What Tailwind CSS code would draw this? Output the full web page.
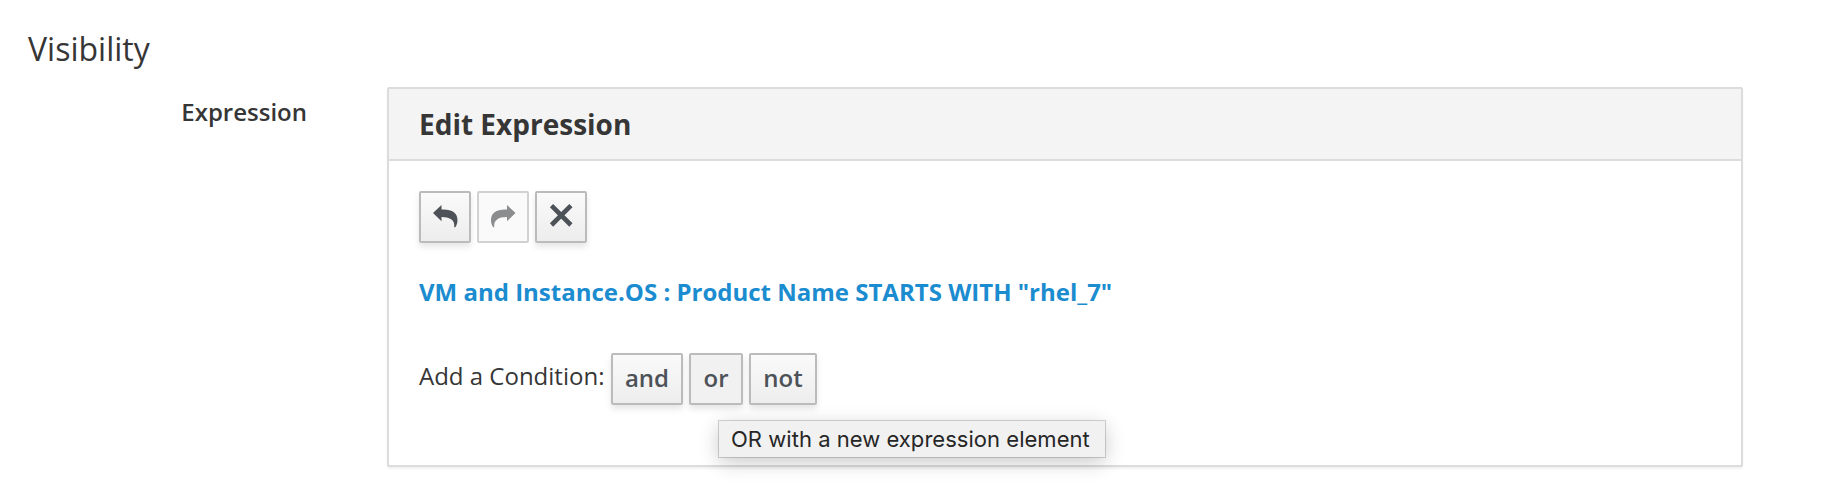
<!DOCTYPE html>
<html lang="en">
<head>
<meta charset="utf-8">
<title>Visibility</title>
<script src="https://cdn.jsdelivr.net/npm/@tailwindcss/browser@4"></script>
</head>
<body class="h-[482px] overflow-hidden bg-white font-['Open_Sans',sans-serif] text-2xl text-[#363636]">
<h3 class="h-[87px] pt-[29px] pl-7 text-[32px] leading-10">Visibility</h3>
<div class="flex">
  <label class="w-[387px] shrink-0 pt-[5px] pr-20 text-right leading-10 font-semibold">Expression</label>
  <section class="relative h-[380px] w-[1356px] rounded-[2px] border-2 border-[#dcdcdc] bg-white shadow-[0_2px_2px_rgba(0,0,0,0.05)]">
    <h3 class="h-[72px] border-b-2 border-[#dcdcdc] bg-[#f4f4f4] pl-[30px] text-[28px] leading-[70px] font-bold">Edit Expression</h3>
    <div class="px-[30px] pt-[30px]">
      <div class="flex gap-1.5">
        <button class="flex size-[52px] items-center justify-center rounded-[2px] border-2 border-[#bbb] bg-linear-to-b from-[#fafafa] to-[#ededed] shadow-[0_4px_6px_rgba(3,3,3,0.1)]" title="Undo">
          <svg class="size-12" viewBox="0 0 48 48" fill="#4d5258"><path d="M12 20 20.500 12v4.500C31 16 36.500 20 36.500 27c0 3-.8 5.500-2.200 7.200h-1.100c.8-6-2.700-10.200-12.700-10.200v4.200z"/></svg>
        </button>
        <button class="flex size-[52px] items-center justify-center rounded-[2px] border-2 border-[#d1d1d1] bg-[#fafafa]" title="Redo" disabled>
          <svg class="size-12" viewBox="0 0 48 48" fill="#8b8d8f"><path d="M36.500 20 28 12v4.500C17.500 16 12 20 12 27c0 3 .8 5.500 2.200 7.200h1.100c-.8-6 2.700-10.200 12.700-10.200v4.200z"/></svg>
        </button>
        <button class="flex size-[52px] items-center justify-center rounded-[2px] border-2 border-[#bbb] bg-linear-to-b from-[#fafafa] to-[#ededed] shadow-[0_4px_6px_rgba(3,3,3,0.1)]" title="Remove">
          <svg class="size-12" viewBox="0 0 48 48"><path d="M14.500 12.600 33.900 32M33.900 12.600 14.500 32" stroke="#4d5258" stroke-width="4.600" fill="none"/></svg>
        </button>
      </div>
      <p class="mt-[29px] leading-10 font-bold text-[#1a8ccf]">VM and Instance.OS : Product Name STARTS WITH "rhel_7"</p>
      <div class="mt-[41px] flex">
        <span class="w-48 pt-[3px] leading-10 whitespace-nowrap">Add a Condition:</span>
        <div class="flex gap-1.5 font-semibold text-[#4d5258]">
          <button class="h-[52px] w-[72px] rounded-[2px] border-2 border-[#bbb] bg-linear-to-b from-[#fafafa] to-[#ededed] pb-0.5 shadow-[0_4px_6px_rgba(3,3,3,0.1)]">and</button>
          <button class="h-[52px] w-[54px] rounded-[2px] border-2 border-[#bbb] bg-[#f1f1f1] pb-0.5 shadow-[0_4px_6px_rgba(3,3,3,0.1)]">or</button>
          <button class="h-[52px] w-[68px] rounded-[2px] border-2 border-[#bbb] bg-linear-to-b from-[#fafafa] to-[#ededed] pb-0.5 shadow-[0_4px_6px_rgba(3,3,3,0.1)]">not</button>
        </div>
      </div>
    </div>
    <div role="tooltip" class="absolute top-[332px] left-[330px] h-[36px] w-[386px] bg-[#f1f1f1] pl-[12px] font-[Inter,sans-serif] text-[22px] leading-[36px] tracking-[0.03px] whitespace-nowrap text-[#262626] shadow-[0_0_0_1px_rgba(0,0,0,0.16),0_5px_20px_rgba(0,0,0,0.22)]">OR with a new expression element</div>
  </section>
</div>
</body>
</html>
